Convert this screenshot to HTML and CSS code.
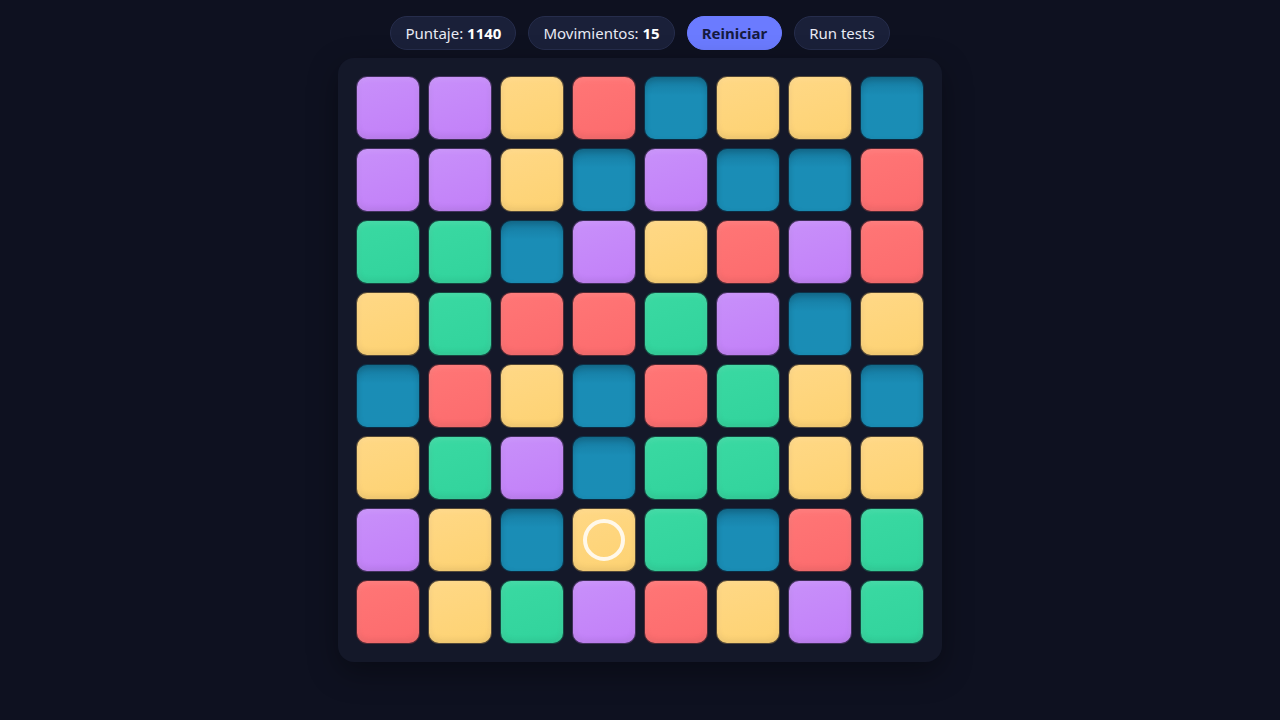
FILE: index.html
```html
<!DOCTYPE html>
<html lang="es">
<head>
<meta charset="utf-8">
<title>Match</title>
<link rel="stylesheet" href="styles.css">
</head>
<body>
<div class="app">
  <div class="bar">
    <div class="pill">Puntaje:&nbsp;<b>1140</b></div>
    <div class="pill">Movimientos:&nbsp;<b>15</b></div>
    <button class="pill primary">Reiniciar</button>
    <button class="pill">Run tests</button>
  </div>
  <div class="board">
    <div class="tile p"></div><div class="tile p"></div><div class="tile y"></div><div class="tile r"></div><div class="tile t"></div><div class="tile y"></div><div class="tile y"></div><div class="tile t"></div>
    <div class="tile p"></div><div class="tile p"></div><div class="tile y"></div><div class="tile t"></div><div class="tile p"></div><div class="tile t"></div><div class="tile t"></div><div class="tile r"></div>
    <div class="tile g"></div><div class="tile g"></div><div class="tile t"></div><div class="tile p"></div><div class="tile y"></div><div class="tile r"></div><div class="tile p"></div><div class="tile r"></div>
    <div class="tile y"></div><div class="tile g"></div><div class="tile r"></div><div class="tile r"></div><div class="tile g"></div><div class="tile p"></div><div class="tile t"></div><div class="tile y"></div>
    <div class="tile t"></div><div class="tile r"></div><div class="tile y"></div><div class="tile t"></div><div class="tile r"></div><div class="tile g"></div><div class="tile y"></div><div class="tile t"></div>
    <div class="tile y"></div><div class="tile g"></div><div class="tile p"></div><div class="tile t"></div><div class="tile g"></div><div class="tile g"></div><div class="tile y"></div><div class="tile y"></div>
    <div class="tile p"></div><div class="tile y"></div><div class="tile t"></div><div class="tile y sel"><span class="ring"></span></div><div class="tile g"></div><div class="tile t"></div><div class="tile r"></div><div class="tile g"></div>
    <div class="tile r"></div><div class="tile y"></div><div class="tile g"></div><div class="tile p"></div><div class="tile r"></div><div class="tile y"></div><div class="tile p"></div><div class="tile g"></div>
  </div>
</div>
</body>
</html>
```
FILE: styles.css
```css
html, body {
  margin: 0;
  padding: 0;
  background: #0e1120;
  height: 100%;
}
body {
  font-family: "Noto Sans", "Open Sans", sans-serif;
  color: #e8eaf4;
}
.app {
  display: flex;
  flex-direction: column;
  align-items: center;
  padding-top: 16px;
}
.bar {
  display: flex;
  gap: 12px;
  align-items: center;
  margin-bottom: 8px;
}
.pill {
  box-sizing: border-box;
  height: 34px;
  padding: 0 14px;
  border-radius: 17px;
  background: #1a2039;
  border: 1px solid #262d4c;
  color: #e8eaf4;
  font-family: inherit;
  font-size: 15px;
  display: flex;
  align-items: center;
  white-space: nowrap;
}
.pill b { font-weight: 700; color: #fff; }
button.pill { cursor: pointer; }
.pill.primary {
  background: #6b7bff;
  border-color: #6b7bff;
  color: #151a40;
  font-weight: 700;
  padding: 0 14px;
}
.board {
  display: grid;
  grid-template-columns: repeat(8, 64px);
  grid-auto-rows: 64px;
  gap: 8px;
  padding: 18px;
  background: #141829;
  border-radius: 16px;
  box-shadow: 0 10px 30px rgba(0,0,0,0.35);
}
.tile {
  position: relative;
  border-radius: 11px;
  box-sizing: border-box;
  border: 1px solid rgba(8,10,24,0.7);
  box-shadow: inset 0 2px 6px rgba(255,255,255,0.10), inset 0 -3px 6px rgba(0,0,0,0.08);
  display: flex;
  align-items: center;
  justify-content: center;
}
.p { background: linear-gradient(160deg, #c890fa, #c27ff8); }
.y { background: linear-gradient(160deg, #ffd886, #fdd272); }
.r { background: linear-gradient(160deg, #ff7676, #fc6b6d); }
.t { background: linear-gradient(180deg, #167aa0, #1a8db6 30%, #1a8db5); box-shadow: inset 0 3px 6px rgba(0,0,0,0.18); }
.g { background: linear-gradient(160deg, #3ad9a2, #31d39c); }
.ring {
  width: 34px;
  height: 34px;
  border: 4px solid #fff8ea;
  border-radius: 50%;
}
```
